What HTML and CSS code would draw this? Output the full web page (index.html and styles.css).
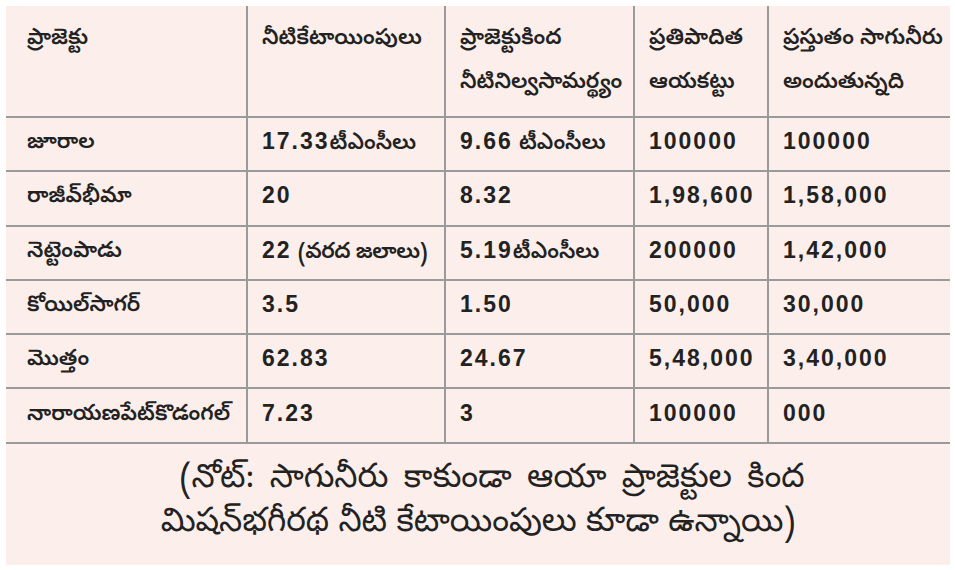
FILE: index.html
```html
<!DOCTYPE html>
<html lang="te">
<head>
<meta charset="utf-8">
<title>ప్రాజెక్టులు</title>
<link rel="stylesheet" href="styles.css">
</head>
<body>
<div class="sheet">
  <table class="grid">
    <colgroup>
      <col class="c1"><col class="c2"><col class="c3"><col class="c4"><col class="c5">
    </colgroup>
    <thead>
      <tr>
        <th>ప్రాజెక్టు</th>
        <th>నీటికేటాయింపులు</th>
        <th>ప్రాజెక్టుకింద<br>నీటినిల్వసామర్థ్యం</th>
        <th>ప్రతిపాదిత<br>ఆయకట్టు</th>
        <th>ప్రస్తుతం సాగునీరు<br>అందుతున్నది</th>
      </tr>
    </thead>
    <tbody>
      <tr><td>జూరాల</td><td><span class="num">17.33</span>టీఎంసీలు</td><td><span class="num">9.66</span> టీఎంసీలు</td><td><span class="num">100000</span></td><td><span class="num">100000</span></td></tr>
      <tr><td>రాజీవ్‌భీమా</td><td><span class="num">20</span></td><td><span class="num">8.32</span></td><td><span class="num">1,98,600</span></td><td><span class="num">1,58,000</span></td></tr>
      <tr><td>నెట్టెంపాడు</td><td><span class="num">22</span> <span class="tight">(వరద జలాలు)</span></td><td><span class="num">5.19</span>టీఎంసీలు</td><td><span class="num">200000</span></td><td><span class="num">1,42,000</span></td></tr>
      <tr><td>కోయిల్‌సాగర్</td><td><span class="num">3.5</span></td><td><span class="num">1.50</span></td><td><span class="num">50,000</span></td><td><span class="num">30,000</span></td></tr>
      <tr><td>మొత్తం</td><td><span class="num">62.83</span></td><td><span class="num">24.67</span></td><td><span class="num">5,48,000</span></td><td><span class="num">3,40,000</span></td></tr>
      <tr><td>నారాయణపేట్‌కొడంగల్</td><td><span class="num">7.23</span></td><td><span class="num">3</span></td><td><span class="num">100000</span></td><td><span class="num">000</span></td></tr>
    </tbody>
  </table>
  <p class="note"><span class="line1">(నోట్: సాగునీరు కాకుండా ఆయా ప్రాజెక్టుల కింద</span><span class="line2">మిషన్‌భగీరథ నీటి కేటాయింపులు కూడా ఉన్నాయి)</span></p>
</div>
</body>
</html>
```
FILE: styles.css
```css
html, body {
  margin: 0;
  padding: 0;
  background: #ffffff;
}
body {
  padding: 6px 5px 5px 6px;
  font-family: "Noto Sans Telugu", "Noto Sans", "DejaVu Sans", sans-serif;
  color: #222222;
}
.sheet {
  width: 944px;
  height: 559px;
  background: #fcefeb;
  display: flex;
  flex-direction: column;
}
.grid {
  width: 944px;
  border-collapse: collapse;
  table-layout: fixed;
  font-size: 22px;
}
.c1 { width: 241px; }
.c2 { width: 198px; }
.c3 { width: 189px; }
.c4 { width: 134px; }
.c5 { width: 182px; }
.grid th,
.grid td {
  border: 2px solid #9a9a9a;
  text-align: left;
  padding: 0 2px 0 14px;
  white-space: nowrap;
  overflow: hidden;
}
.grid th {
  font-weight: 600;
  font-size: 22px;
  vertical-align: top;
  height: 111px;
  padding-top: 12px;
  line-height: 44px;
  border-top: none;
  box-sizing: border-box;
}
.grid td {
  height: 52.3px;
  font-weight: 600;
  vertical-align: middle;
}
.grid th:first-child,
.grid td:first-child {
  border-left: none;
  padding-left: 21px;
  padding-right: 0;
}
.grid th:last-child,
.grid td:last-child {
  border-right: none;
}
.num {
  font-family: "Liberation Sans", Arial, sans-serif;
  font-size: 23px;
  font-weight: 700;
  letter-spacing: 2px;
}
.tight {
  letter-spacing: -0.5px;
}
.note {
  margin: 0;
  flex: 1;
  display: flex;
  flex-direction: column;
  align-items: center;
  justify-content: center;
  text-align: center;
  font-size: 33px;
  line-height: 44px;
  padding-bottom: 2px;
}
.line1 {
  word-spacing: 6px;
  margin-left: 28px;
}
```
